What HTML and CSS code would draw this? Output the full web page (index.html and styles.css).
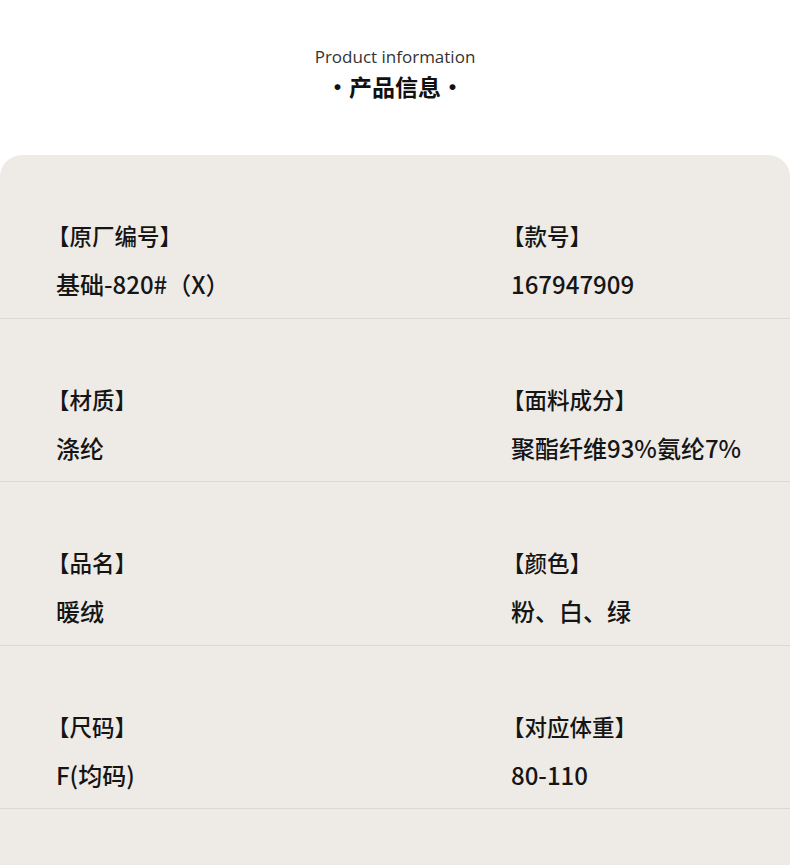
FILE: index.html
```html
<!DOCTYPE html>
<html lang="zh">
<head>
<meta charset="utf-8">
<title>Product information</title>
<link rel="stylesheet" href="styles.css">
</head>
<body>
<header class="head">
  <div class="head-en">Product information</div>
  <div class="head-cn">·产品信息·</div>
</header>
<section class="card">
  <div class="row">
    <div class="cell"><div class="label">【原厂编号】</div><div class="value">基础-820#（X）</div></div>
    <div class="cell"><div class="label">【款号】</div><div class="value">167947909</div></div>
  </div>
  <div class="row">
    <div class="cell"><div class="label">【材质】</div><div class="value">涤纶</div></div>
    <div class="cell"><div class="label">【面料成分】</div><div class="value">聚酯纤维93%氨纶7%</div></div>
  </div>
  <div class="row">
    <div class="cell"><div class="label">【品名】</div><div class="value">暖绒</div></div>
    <div class="cell"><div class="label">【颜色】</div><div class="value">粉、白、绿</div></div>
  </div>
  <div class="row">
    <div class="cell"><div class="label">【尺码】</div><div class="value">F(均码)</div></div>
    <div class="cell"><div class="label">【对应体重】</div><div class="value">80-110</div></div>
  </div>
</section>
</body>
</html>
```
FILE: styles.css
```css
html, body {
  margin: 0;
  padding: 0;
  background: #ffffff;
}
body {
  width: 790px;
  height: 865px;
  overflow: hidden;
  font-family: "Noto Sans CJK SC", "Noto Sans", sans-serif;
  color: #1a1a1a;
}
.head {
  display: flex;
  flex-direction: column;
  align-items: center;
  padding-top: 45px;
  height: 110px;
  box-sizing: border-box;
}
.head-en {
  font-size: 17px;
  line-height: 24px;
  color: #333;
  font-family: "Open Sans", "Noto Sans", sans-serif;
}
.head-cn {
  font-size: 23px;
  line-height: 32px;
  font-weight: 600;
  color: #111;
  margin-top: 1px;
}
.card {
  margin-top: 45px;
  background: #eeebe7;
  border-radius: 22px 22px 0 0;
  height: 710px;
}
.row {
  display: grid;
  grid-template-columns: 455px 1fr;
  height: 163.5px;
  box-sizing: border-box;
  border-bottom: 1px solid #dcd9d5;
  padding-left: 47px;
}
.cell {
  padding-top: 64px;
}
.label {
  font-size: 22.5px;
  line-height: 32px;
  font-weight: 500;
  color: #151515;
}
.value {
  font-size: 24px;
  line-height: 32px;
  font-weight: 500;
  margin-top: 17px;
  padding-left: 9px;
  color: #151515;
}
```
